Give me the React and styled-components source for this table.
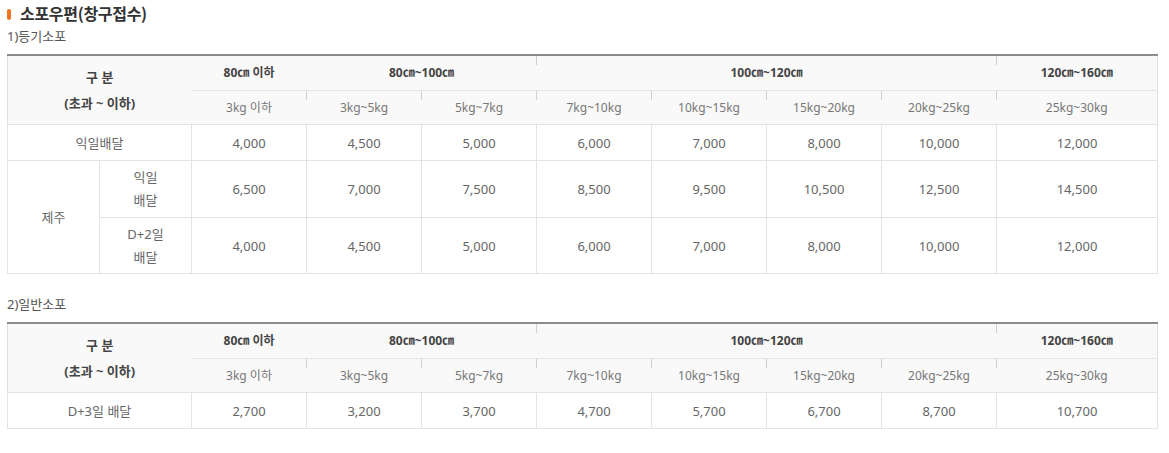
import React from "react";
import styled, { createGlobalStyle } from "styled-components";

const Global = createGlobalStyle`
  html, body { margin: 0; padding: 0; background: #fff; }
  body { font-family: "Noto Sans", "Noto Sans CJK KR", sans-serif; color: #555; }
`;

const Page = styled.div`
  padding: 2px 12px 0 7px;
`;

const Title = styled.h2`
  display: flex;
  align-items: center;
  gap: 9px;
  margin: 0;
  height: 22px;
  font-size: 16px;
  font-weight: 700;
  color: #333;
  font-family: "Noto Sans CJK KR", sans-serif;
  letter-spacing: -0.3px;
`;

const Bullet = styled.span`
  width: 4px;
  height: 11px;
  border-radius: 2px;
  background: #ee7420;
  margin-top: 2px;
`;

const SubTitle = styled.div`
  margin-top: ${(p) => p.$top}px;
  font-size: 13px;
  line-height: 18px;
  color: #555;
`;

const Table = styled.table`
  margin-top: 9px;
  width: 1150px;
  table-layout: fixed;
  border-collapse: collapse;
  border-top: 2px solid #8c8c8c;
  border-left: 1px solid #e0e0e0;
  border-right: 1px solid #e0e0e0;
  text-align: center;
`;

const HeadCell = styled.th`
  position: relative;
  padding: 0;
  height: ${(p) => p.$h || 33}px;
  background: #f9f9f9;
  border-bottom: 1px solid #e4e4e4;
  font-size: 12px;
  font-weight: ${(p) => (p.$sub ? 400 : 700)};
  color: ${(p) => (p.$sub ? "#777" : "#444")};
  line-height: ${(p) => (p.$lh ? p.$lh : 18)}px;

  & + &::before {
    content: "";
    position: absolute;
    left: -1px;
    top: 0;
    width: 1px;
    height: 9px;
    background: #cfcfcf;
  }
`;

const GroupHead = styled(HeadCell)`
  font-size: 13px;
`;

const Cell = styled.td`
  padding: 0;
  height: ${(p) => p.$h || 35}px;
  border: 1px solid #e4e4e4;
  font-size: 13px;
  color: #666;
  line-height: ${(p) => p.$lh || 18}px;
`;

const sizeRow = ["3kg 이하", "3kg~5kg", "5kg~7kg", "7kg~10kg", "10kg~15kg", "15kg~20kg", "20kg~25kg", "25kg~30kg"];

function Cols() {
  return (
    <colgroup>
      <col style={{ width: 92 }} />
      <col style={{ width: 92 }} />
      {[0, 1, 2, 3, 4, 5, 6].map((i) => (
        <col key={i} style={{ width: 115 }} />
      ))}
      <col style={{ width: 161 }} />
    </colgroup>
  );
}

function Head() {
  return (
    <thead>
      <tr>
        <GroupHead colSpan={2} rowSpan={2} $lh={26}>
          구 분<br />(초과 ~ 이하)
        </GroupHead>
        <HeadCell $h={34}>80㎝ 이하</HeadCell>
        <HeadCell colSpan={2}>80㎝~100㎝</HeadCell>
        <HeadCell colSpan={4}>100㎝~120㎝</HeadCell>
        <HeadCell>120㎝~160㎝</HeadCell>
      </tr>
      <tr>
        {sizeRow.map((s) => (
          <HeadCell key={s} $sub>
            {s}
          </HeadCell>
        ))}
      </tr>
    </thead>
  );
}

const Values = ({ list }) =>
  list.map((v, i) => <Cell key={i}>{v}</Cell>);

export default function App() {
  return (
    <>
      <Global />
      <Page>
        <Title>
          <Bullet />
          소포우편(창구접수)
        </Title>
        <SubTitle $top={3}>1)등기소포</SubTitle>
        <Table>
          <Cols />
          <Head />
          <tbody>
            <tr>
              <Cell colSpan={2}>익일배달</Cell>
              <Values list={["4,000", "4,500", "5,000", "6,000", "7,000", "8,000", "10,000", "12,000"]} />
            </tr>
            <tr>
              <Cell rowSpan={2}>제주</Cell>
              <Cell $h={56} $lh={23}>
                익일<br />배달
              </Cell>
              <Values list={["6,500", "7,000", "7,500", "8,500", "9,500", "10,500", "12,500", "14,500"]} />
            </tr>
            <tr>
              <Cell $h={55} $lh={23}>
                D+2일<br />배달
              </Cell>
              <Values list={["4,000", "4,500", "5,000", "6,000", "7,000", "8,000", "10,000", "12,000"]} />
            </tr>
          </tbody>
        </Table>
        <SubTitle $top={21}>2)일반소포</SubTitle>
        <Table>
          <Cols />
          <Head />
          <tbody>
            <tr>
              <Cell colSpan={2}>D+3일 배달</Cell>
              <Values list={["2,700", "3,200", "3,700", "4,700", "5,700", "6,700", "8,700", "10,700"]} />
            </tr>
          </tbody>
        </Table>
      </Page>
    </>
  );
}
